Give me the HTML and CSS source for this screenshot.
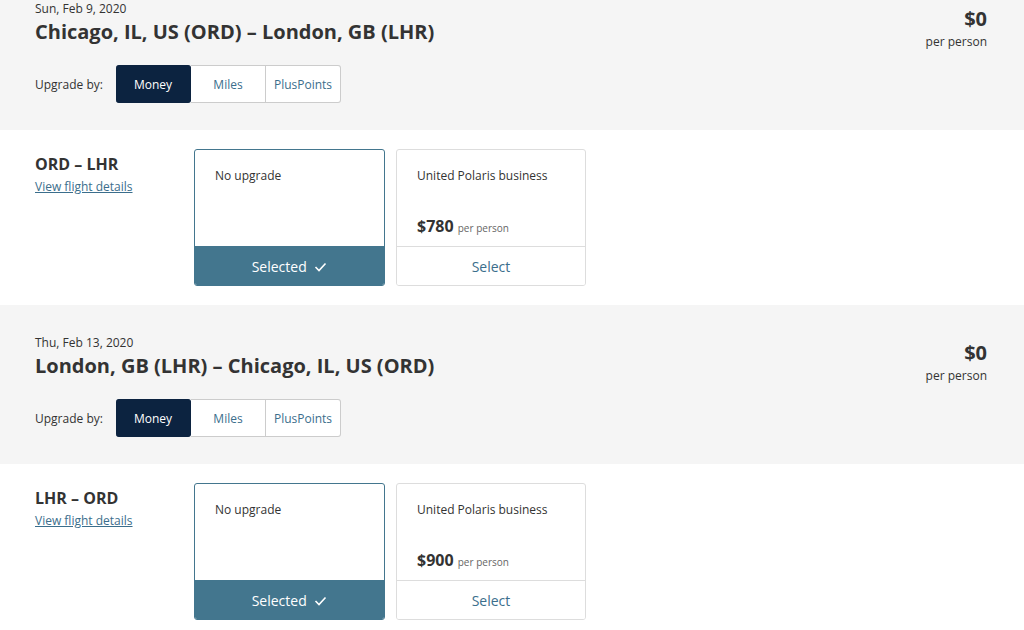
FILE: index.html
```html
<!DOCTYPE html>
<html lang="en">
<head>
<meta charset="UTF-8">
<meta name="viewport" content="width=device-width, initial-scale=1.0">
<title>Upgrade options</title>
<link rel="stylesheet" href="styles.css">
</head>
<body>
    <!-- Outbound segment -->
    <section class="segment segment-first">
        <div class="segment-head">
            <div class="segment-info">
                <div class="segment-date">Sun, Feb 9, 2020</div>
                <h2 class="segment-route">Chicago, IL, US (ORD) – London, GB (LHR)</h2>
                <div class="upgrade-by">
                    <span class="upgrade-label">Upgrade by:</span>
                    <div class="toggle">
                        <button class="toggle-btn active">Money</button>
                        <button class="toggle-btn">Miles</button>
                        <button class="toggle-btn">PlusPoints</button>
                    </div>
                </div>
            </div>
            <div class="segment-total">
                <div class="total-amount">$0</div>
                <div class="total-per">per person</div>
            </div>
        </div>
        <div class="segment-body">
            <div class="flight">
                <h3 class="flight-code">ORD – LHR</h3>
                <a href="#" class="flight-link">View flight details</a>
            </div>
            <div class="option selected">
                <div class="option-main">
                    <div class="option-name">No upgrade</div>
                </div>
                <button class="option-action">Selected
                    <svg width="13" height="10" viewBox="0 0 13 10"><path d="M1.5 5 L5 8.5 L11.5 1.5" fill="none" stroke="#fff" stroke-width="1.6"/></svg>
                </button>
            </div>
            <div class="option">
                <div class="option-main">
                    <div class="option-name">United Polaris business</div>
                    <div class="option-price"><strong>$780</strong> <span>per person</span></div>
                </div>
                <button class="option-action">Select</button>
            </div>
        </div>
    </section>

    <!-- Return segment -->
    <section class="segment">
        <div class="segment-head">
            <div class="segment-info">
                <div class="segment-date">Thu, Feb 13, 2020</div>
                <h2 class="segment-route">London, GB (LHR) – Chicago, IL, US (ORD)</h2>
                <div class="upgrade-by">
                    <span class="upgrade-label">Upgrade by:</span>
                    <div class="toggle">
                        <button class="toggle-btn active">Money</button>
                        <button class="toggle-btn">Miles</button>
                        <button class="toggle-btn">PlusPoints</button>
                    </div>
                </div>
            </div>
            <div class="segment-total">
                <div class="total-amount">$0</div>
                <div class="total-per">per person</div>
            </div>
        </div>
        <div class="segment-body">
            <div class="flight">
                <h3 class="flight-code">LHR – ORD</h3>
                <a href="#" class="flight-link">View flight details</a>
            </div>
            <div class="option selected">
                <div class="option-main">
                    <div class="option-name">No upgrade</div>
                </div>
                <button class="option-action">Selected
                    <svg width="13" height="10" viewBox="0 0 13 10"><path d="M1.5 5 L5 8.5 L11.5 1.5" fill="none" stroke="#fff" stroke-width="1.6"/></svg>
                </button>
            </div>
            <div class="option">
                <div class="option-main">
                    <div class="option-name">United Polaris business</div>
                    <div class="option-price"><strong>$900</strong> <span>per person</span></div>
                </div>
                <button class="option-action">Select</button>
            </div>
        </div>
    </section>
</body>
</html>
```

FILE: styles.css
```css
/* General Reset */
* {
    margin: 0;
    padding: 0;
    box-sizing: border-box;
}

body {
    font-family: "Open Sans", Arial, sans-serif;
    color: #333;
    background: #fff;
    overflow: hidden;
}

/* Segment header (grey band) */
.segment-first {
    margin-top: -29px; /* page is scrolled a little */
}

.segment-head {
    display: flex;
    justify-content: space-between;
    background-color: #f5f5f5;
    padding: 30px 37px 27px 35px;
}

.segment-date {
    font-size: 12px;
    line-height: 16px;
}

.segment-route {
    font-size: 20px;
    line-height: 28px;
    font-weight: 700;
    margin-top: 1px;
}

.upgrade-by {
    display: flex;
    align-items: center;
    margin-top: 19px;
}

.upgrade-label {
    font-size: 12px;
    width: 81px;
}

.toggle {
    display: flex;
}

.toggle-btn {
    width: 75px;
    height: 38px;
    font-family: inherit;
    font-size: 12px;
    color: #3b6e8c;
    background-color: #fff;
    border: 1px solid #ccc;
    border-left: none;
    cursor: pointer;
}

.toggle-btn:last-child {
    border-radius: 0 3px 3px 0;
}

.toggle-btn.active {
    color: #fff;
    background-color: #0c2340;
    border-color: #0c2340;
    border-radius: 3px;
}

.segment-total {
    text-align: right;
    margin-top: 6px;
}

.total-amount {
    font-size: 20px;
    line-height: 24px;
    font-weight: 700;
}

.total-per {
    font-size: 12px;
    line-height: 16px;
    margin-top: 3px;
}

/* Segment body (white) */
.segment-body {
    display: flex;
    gap: 11px;
    padding: 19px 35px 19px 35px;
}

.flight {
    width: 148px;
}

.flight-code {
    font-size: 16px;
    line-height: 20px;
    font-weight: 700;
    margin-top: 5px;
}

.flight-link {
    display: inline-block;
    font-size: 12px;
    color: #3b6e8c;
    margin-top: 4px;
}

.option {
    display: flex;
    flex-direction: column;
    width: 190px;
    height: 137px;
    border: 1px solid #ddd;
    border-radius: 3px;
    overflow: hidden;
}

.option.selected {
    width: 191px;
    border-color: #43768e;
}

.option-main {
    flex: 1;
    display: flex;
    flex-direction: column;
    justify-content: space-between;
    padding: 17px 20px 9px 20px;
}

.option-name {
    font-size: 12px;
    line-height: 18px;
}

.option-price strong {
    font-size: 16px;
    font-weight: 700;
}

.option-price span {
    font-size: 10px;
    color: #666;
}

.option-action {
    height: 39px;
    font-family: inherit;
    font-size: 14px;
    color: #3b6e8c;
    background-color: #fff;
    border: none;
    border-top: 1px solid #ddd;
    cursor: pointer;
}

.selected .option-action {
    color: #fff;
    background-color: #43768e;
    border-top-color: #43768e;
}

.option-action svg {
    margin-left: 4px;
    vertical-align: 0;
}
```
